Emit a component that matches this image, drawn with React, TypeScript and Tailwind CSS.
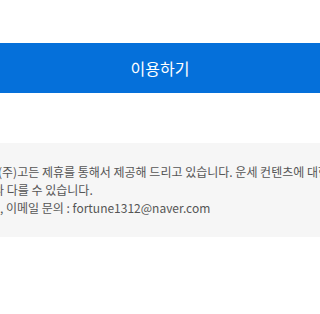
const font = { fontFamily: '"Noto Sans CJK KR", "Noto Sans", sans-serif' }

function Line({ hidden, shown, offset }: { hidden: string; shown: string; offset: string }) {
  return (
    <p className="flex whitespace-nowrap">
      <span className="w-0 shrink-0 flex justify-end">{hidden}</span>
      <span className={offset}>{shown}</span>
    </p>
  )
}

export default function App() {
  return (
    <div className="w-[320px] h-[314px] bg-white overflow-hidden" style={font}>
      <div className="pt-[43px]">
        <button className="w-full h-[50px] bg-[#0570da] text-white text-[16px] flex items-center justify-center">
          이용하기
        </button>
      </div>
      <section className="mt-[50px] bg-[#f6f6f6] py-[20px] text-[12px] leading-[18px] text-[#555] overflow-hidden">
        <Line hidden="오늘의 운세 서비스는 " shown="(주)고든 제휴를 통해서 제공해 드리고 있습니다. 운세 컨텐츠에 대한 저작권은 (주)고든에 있습니다." offset="-ml-[2px]" />
        <Line hidden="운세 결과는 재미로 참고하시기 바라며 실제" shown="와 다를 수 있습니다." offset="-ml-[7px]" />
        <Line hidden="고객센터 운영시간 평일 10:00 ~ 18:00" shown=", 이메일 문의 : fortune1312@naver.com" offset="ml-[0px]" />
      </section>
    </div>
  )
}
